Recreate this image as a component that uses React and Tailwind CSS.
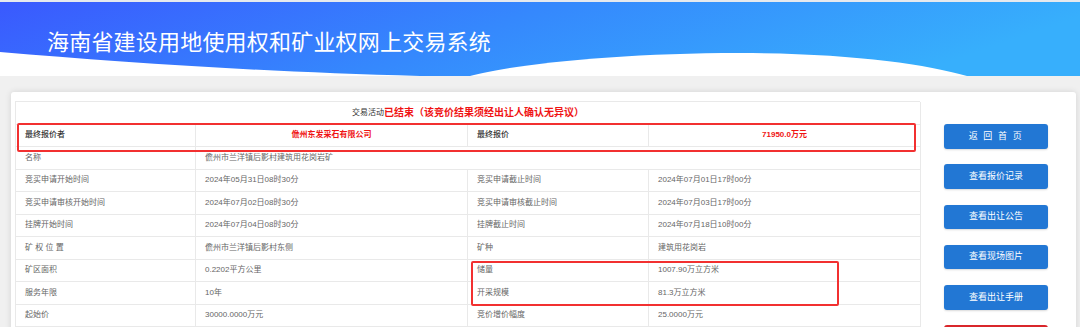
import React from "react";

const FONT = { fontFamily: '"Liberation Sans","Noto Sans CJK SC",sans-serif' };

const rows = [
  ["竞买申请开始时间", "2024年05月31日08时30分", "竞买申请截止时间", "2024年07月01日17时00分"],
  ["竞买申请审核开始时间", "2024年07月02日08时30分", "竞买申请审核截止时间", "2024年07月03日17时00分"],
  ["挂牌开始时间", "2024年07月04日08时30分", "挂牌截止时间", "2024年07月18日10时00分"],
  ["矿 权 位 置", "儋州市兰洋镇后影村东侧", "矿种", "建筑用花岗岩"],
  ["矿区面积", "0.2202平方公里", "储量", "1007.90万立方米"],
  ["服务年限", "10年", "开采规模", "81.3万立方米"],
  ["起始价", "30000.0000万元", "竞价增价幅度", "25.0000万元"],
];

const cell = "flex items-center border-r border-b border-[#e9e9e9] pl-[9px] text-[8px] text-[#666] whitespace-nowrap";

function Header() {
  return (
    <div className="relative h-[76px] w-full">
      <svg className="absolute inset-0" width="1080" height="76" viewBox="0 0 1080 76" preserveAspectRatio="none">
        <defs>
          <linearGradient id="hg" x1="0" y1="0" x2="1" y2="0.2">
            <stop offset="0" stopColor="#3a59fe" />
            <stop offset="0.5" stopColor="#3588fd" />
            <stop offset="1" stopColor="#37affc" />
          </linearGradient>
        </defs>
        <rect x="0" y="0" width="1080" height="2" fill="#e6e9ee" />
        <rect x="0" y="2" width="1080" height="74" fill="url(#hg)" />
        <path d="M0 52 C 120 62 260 72 420 76 L 0 76 Z" fill="#ffffff" />
        <path d="M 470 76 C 515 64 620 53 740 53 C 850 53 925 64 967 76 Z" fill="#ffffff" />
      </svg>
      <h1
        className="relative pl-[47px] pt-[27px] text-[22px] leading-[26px] text-white font-normal tracking-[0.2px]"
        style={{ fontFamily: '"Noto Sans CJK SC",sans-serif' }}
      >
        海南省建设用地使用权和矿业权网上交易系统
      </h1>
    </div>
  );
}

function Table() {
  return (
    <div className="relative w-[905px]">
      <div className="grid grid-cols-[180px_272px_181px_272px] auto-rows-[22.5px] border-l border-t border-[#e9e9e9]">
        <div className="col-span-4 flex items-center justify-center border-r border-b border-[#e9e9e9] whitespace-nowrap">
          <span className="text-[8px] text-[#333]">交易活动</span>
          <span className="text-[10px] font-bold text-[#f01414]">已结束（该竞价结果须经出让人确认无异议）</span>
        </div>

        <div className={cell + " !text-[#333] font-medium"}>最终报价者</div>
        <div className={cell + " justify-center !pl-0 !text-[#f01414] font-bold"}>儋州东发采石有限公司</div>
        <div className={cell + " !text-[#333] font-medium"}>最终报价</div>
        <div className={cell + " justify-center !pl-0 !text-[#f01414] font-bold"}>71950.0万元</div>

        <div className={cell}>名称</div>
        <div className={cell + " col-span-3"}>儋州市兰洋镇后影村建筑用花岗岩矿</div>

        {rows.map((r, i) => (
          <React.Fragment key={i}>
            {r.map((t, j) => (
              <div key={j} className={cell}>{t}</div>
            ))}
          </React.Fragment>
        ))}
      </div>
      <div className="absolute left-[2px] top-[22px] w-[899px] h-[29px] border-2 border-[#f23030] rounded-[2px]" />
      <div className="absolute left-[456px] top-[159.5px] w-[368px] h-[45.5px] border-2 border-[#f23030] rounded-[2px]" />
    </div>
  );
}

const buttons = ["返 回 首 页", "查看报价记录", "查看出让公告", "查看现场图片", "查看出让手册"];

export default function App() {
  return (
    <div className="w-[1080px] h-[327px] overflow-hidden bg-[#f0f0f0]" style={FONT}>
      <Header />
      <div className="pt-[16px] pl-[11px] pr-[4px]">
        <div className="flex bg-white rounded-[3px] shadow-[0_0_6px_rgba(0,0,0,0.12)] pl-[4px] pt-[9px] h-[400px]">
          <Table />
          <div className="ml-[24px] pt-[23px] flex flex-col gap-[15.75px]">
            {buttons.map((b, i) => (
              <div
                key={i}
                className={
                  "w-[104px] h-[24.5px] rounded-[3px] bg-[#2277d4] text-white text-[9px] flex items-center justify-center shadow-[0_1px_2px_rgba(0,0,0,0.15)] " +
                  (i === 0 ? "tracking-[1.6px]" : "")
                }
              >
                {b}
              </div>
            ))}
            <div className="w-[104px] h-[24.5px] rounded-[3px] bg-[#d9262b]" />
          </div>
        </div>
      </div>
    </div>
  );
}
